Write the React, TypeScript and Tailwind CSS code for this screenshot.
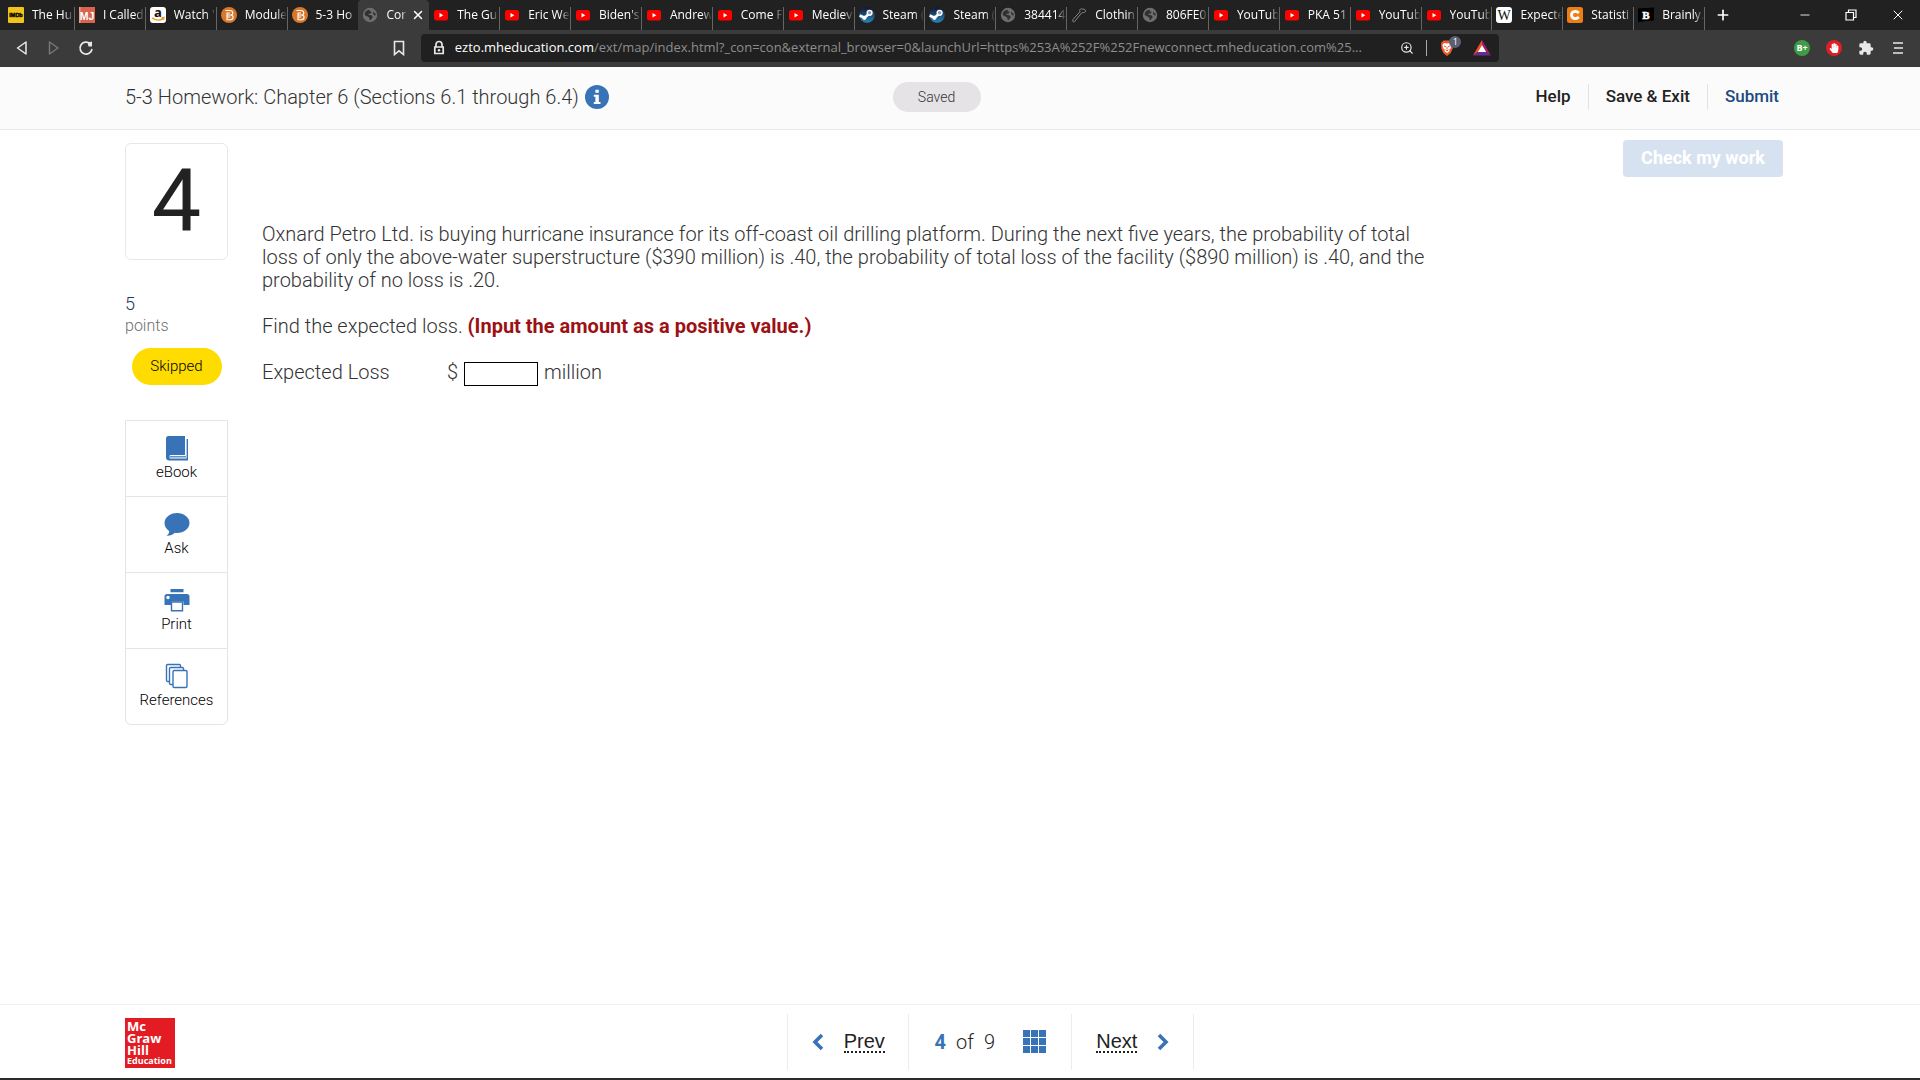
import type { ReactNode } from "react";
import { Minus, Plus, X, ZoomIn } from "lucide-react";
import { clsx } from "clsx";
import { FaHandPaper } from "react-icons/fa";
import { MdExtension } from "react-icons/md";

type TabKind =
  | "imdb"
  | "mj"
  | "amazon"
  | "bright"
  | "globe"
  | "youtube"
  | "steam"
  | "bone"
  | "wiki"
  | "chegg"
  | "brainly";

const TABS: { kind: TabKind; title: string; active?: boolean }[] = [
  { kind: "imdb", title: "The Hu" },
  { kind: "mj", title: "I Called" },
  { kind: "amazon", title: "Watch '" },
  { kind: "bright", title: "Module" },
  { kind: "bright", title: "5-3 Ho" },
  { kind: "globe", title: "Cor", active: true },
  { kind: "youtube", title: "The Gu" },
  { kind: "youtube", title: "Eric We" },
  { kind: "youtube", title: "Biden's" },
  { kind: "youtube", title: "Andrew" },
  { kind: "youtube", title: "Come F" },
  { kind: "youtube", title: "Mediev" },
  { kind: "steam", title: "Steam (" },
  { kind: "steam", title: "Steam (" },
  { kind: "globe", title: "384414" },
  { kind: "bone", title: "Clothin" },
  { kind: "globe", title: "806FE0" },
  { kind: "youtube", title: "YouTub" },
  { kind: "youtube", title: "PKA 51" },
  { kind: "youtube", title: "YouTub" },
  { kind: "youtube", title: "YouTub" },
  { kind: "wiki", title: "Expecte" },
  { kind: "chegg", title: "Statisti" },
  { kind: "brainly", title: "Brainly." },
];

function Favicon({ kind }: { kind: TabKind }) {
  switch (kind) {
    case "imdb":
      return (
        <svg viewBox="0 0 16 16" className="size-4">
          <rect width="16" height="16" rx="1" fill="#f0c419" />
          <text
            x="8"
            y="10"
            textAnchor="middle"
            fontFamily="Liberation Sans"
            fontWeight="700"
            fontSize="5.5"
            stroke="#000"
            strokeWidth="0.4"
          >
            IMDb
          </text>
        </svg>
      );
    case "mj":
      return (
        <svg viewBox="0 0 16 16" className="size-4">
          <rect width="16" height="16" fill="#d9634c" />
          <rect width="1.5" height="16" fill="#e9a08f" />
          <text
            x="8"
            y="12.5"
            textAnchor="middle"
            fontFamily="Liberation Sans"
            fontWeight="700"
            fontSize="10.5"
            fill="#fff"
          >
            MJ
          </text>
        </svg>
      );
    case "amazon":
      return (
        <svg viewBox="0 0 16 16" className="size-4">
          <rect width="16" height="16" rx="3" fill="#fff" />
          <text
            x="8"
            y="10"
            textAnchor="middle"
            fontFamily="Open Sans"
            fontWeight="700"
            fontSize="13"
            fill="#111"
          >
            a
          </text>
          <path
            d="M2 10.8c3.5 3 8.5 3 11.5.6M11.5 10.8l2.5-.2-.6 2.4"
            fill="none"
            stroke="#f59a1d"
            strokeWidth="1.4"
          />
        </svg>
      );
    case "bright":
      return (
        <svg viewBox="0 0 16 16" className="size-4">
          <circle cx="8" cy="8" r="8" fill="#d9772b" />
          <path
            d="M4.5 3.5h4.5c3.5 0 3.5 4 1 4.5 3 .5 2.8 4.8-1 4.8H6V6h3M6 12.8V10h3.2M6 8h4"
            fill="none"
            stroke="#fff"
            strokeWidth="1.1"
          />
        </svg>
      );
    case "globe":
      return (
        <svg viewBox="0 0 16 16" className="size-4">
          <circle cx="8" cy="8" r="7.2" fill="#6e6e6e" />
          <path
            d="M2.8 5.8c1.3-2 3-3 5-3-.6 1.4.4 1.8 1.6 2 .4 1.5-.8 1.9-2.4 1.9-1 0-1.2 1.3.8 1.3 2 0 3.2 1 2.7 2.6-.5 1.3-1.7 1.5-2.2 2.8-1.2-.3-.6-2-1.2-2.8C6.3 9.5 4 9.3 2.8 8z"
            fill="#303030"
          />
          <path
            d="M11 4.5c1 .8 1.3 1.8 2.6 2v2c-1.6.2-2.8-1.2-2.6-4z"
            fill="#303030"
          />
        </svg>
      );
    case "youtube":
      return (
        <svg viewBox="0 0 16 16" className="size-4">
          <rect x="1" y="3" width="14" height="10.5" rx="2.5" fill="#f00" />
          <path d="M6.500 6v4.500l3.800-2.200z" fill="#fff" />
        </svg>
      );
    case "steam":
      return (
        <svg viewBox="0 0 16 16" className="size-4">
          <defs>
            <linearGradient id="steam" x1="0" y1="0" x2="0" y2="1">
              <stop offset="0" stopColor="#10182e" />
              <stop offset="1" stopColor="#2a86bd" />
            </linearGradient>
          </defs>
          <circle cx="8" cy="8" r="7.8" fill="url(#steam)" />
          <path
            d="M.6 8.5l5 2.2 4.500-4"
            fill="none"
            stroke="#fff"
            strokeWidth="2.6"
          />
          <circle cx="5.4" cy="10.8" r="2.1" fill="#fff" />
          <circle cx="10.6" cy="5.8" r="3.1" fill="#fff" />
          <circle cx="10.6" cy="5.8" r="1.7" fill="#8fa3b8" />
        </svg>
      );
    case "bone":
      return (
        <svg viewBox="0 0 16 16" className="size-4">
          <path
            d="M2 12.5l7-7.8c-.8-1.200 0-3 1.500-2.900 1 .1 1.600.6 2.400.5 1.500-.1 2.200 1.700 1.200 2.700-1 1-2.600.2-3.400.9L3.800 14.300c-.4 1-1.900.9-2-.2z"
            fill="#1f1f1f"
            stroke="#8a8a8a"
          />
        </svg>
      );
    case "wiki":
      return (
        <svg viewBox="0 0 16 16" className="size-4">
          <rect width="16" height="16" rx="3" fill="#fff" />
          <text
            x="8"
            y="12.5"
            textAnchor="middle"
            fontFamily="Liberation Serif"
            fontSize="14"
            fill="#111"
          >
            W
          </text>
        </svg>
      );
    case "chegg":
      return (
        <svg viewBox="0 0 16 16" className="size-4">
          <rect width="16" height="16" rx="2.5" fill="#eb7f14" />
          <path
            d="M11.8 6C8.8 3 4.5 4.8 4.5 8s4.3 5 7.3 2"
            fill="none"
            stroke="#fff"
            strokeWidth="2.8"
          />
        </svg>
      );
    case "brainly":
      return (
        <svg viewBox="0 0 16 16" className="size-4">
          <path d="M0 1.5L16 .5v13L0 15z" fill="#000" />
          <text
            x="8"
            y="12"
            textAnchor="middle"
            fontFamily="Liberation Serif"
            fontWeight="700"
            fontSize="11"
            fill="#fff"
            stroke="#fff"
            strokeWidth="0.5"
          >
            B
          </text>
        </svg>
      );
  }
}

function TabStrip() {
  return (
    <div className="flex h-[30px] bg-[#212121]">
      <div className="flex min-w-0 flex-1 pl-1">
        {TABS.map((tab, i) => {
          const hasDivider = !tab.active && !TABS[i + 1]?.active;
          return (
            <div
              key={i}
              className={clsx(
                "flex min-w-0 flex-1 items-center rounded-t pl-1",
                tab.active && "bg-[#3b3b3b]",
              )}
            >
              <button className="flex min-w-0 flex-1 items-center gap-2">
                <span className="shrink-0">
                  <Favicon kind={tab.kind} />
                </span>
                <span className="min-w-0 flex-1 overflow-hidden text-left text-xs whitespace-nowrap text-white [mask-image:linear-gradient(to_right,black_75%,transparent)]">
                  {tab.title}
                </span>
              </button>
              {tab.active ? (
                <button aria-label="Close tab" className="mx-1 shrink-0">
                  <X className="size-3.5 text-white" strokeWidth={2.5} />
                </button>
              ) : (
                <span
                  className={clsx(
                    "h-[23px] w-px shrink-0 self-end",
                    hasDivider && "bg-[#666666]",
                  )}
                />
              )}
            </div>
          );
        })}
      </div>
      <div className="flex w-[215px] shrink-0 items-center justify-between pr-3.5 pl-2.5 text-white">
        <button aria-label="New tab">
          <Plus className="size-4" strokeWidth={2.5} />
        </button>
        <div className="flex items-center gap-8">
          <button aria-label="Minimize">
            <Minus className="size-3.5" strokeWidth={1.5} />
          </button>
          <button aria-label="Restore">
            <svg viewBox="0 0 14 14" className="size-3.5">
              <path
                d="M2 4.5h7.5V12H2zM4.5 4.5V2H12v7.5H9.5"
                fill="none"
                stroke="currentColor"
                strokeWidth="1.2"
              />
            </svg>
          </button>
          <button aria-label="Close window">
            <X className="size-4" strokeWidth={1.5} />
          </button>
        </div>
      </div>
    </div>
  );
}

function Toolbar() {
  return (
    <div className="flex h-[37px] items-center bg-[#3b3b3b] px-3.5 pb-px text-[#e8e8e8]">
      <div className="flex flex-1 items-center gap-4">
        <button aria-label="Back">
          <svg viewBox="0 0 16 16" className="size-4">
            <path
              d="M12 2v12L3.5 8z"
              fill="none"
              stroke="currentColor"
              strokeWidth="1.5"
              strokeLinejoin="round"
            />
          </svg>
        </button>
        <button aria-label="Forward">
          <svg viewBox="0 0 16 16" className="size-4">
            <path
              d="M3.5 2v12l8.5-6z"
              fill="none"
              stroke="#777"
              strokeWidth="1.5"
              strokeLinejoin="round"
            />
          </svg>
        </button>
        <button aria-label="Reload">
          <svg viewBox="0 0 16 16" className="size-4">
            <path
              d="M14 9a6 6 0 1 1-2-5.5"
              fill="none"
              stroke="currentColor"
              strokeWidth="1.7"
            />
            <path d="M9.5 2.5L14 1.5V6.5H10.5z" fill="currentColor" />
          </svg>
        </button>
        <button aria-label="Bookmark this page" className="mr-3.5 ml-auto">
          <svg viewBox="0 0 16 16" className="size-4">
            <path
              d="M3.5 1.5h9v13L8 10.8l-4.5 3.7z"
              fill="none"
              stroke="currentColor"
              strokeWidth="1.6"
            />
          </svg>
        </button>
      </div>
      <div className="flex h-7 w-[57%] items-center rounded bg-[#202020] pr-2 pl-2.5">
        <svg viewBox="0 0 16 16" className="mr-2 size-4 shrink-0">
          <path
            d="M5 7V4.5a3 3 0 0 1 6 0V7M3.8 7h8.4v6.5H3.8z"
            fill="none"
            stroke="currentColor"
            strokeWidth="1.7"
          />
          <circle cx="8" cy="10.2" r="1.2" fill="currentColor" />
        </svg>
        <p className="min-w-0 flex-1 truncate text-[13px] text-[#8e8e8e]">
          <span className="text-white">ezto.mheducation.com</span>
          /ext/map/index.html?_con=con&amp;external_browser=0&amp;launchUrl=https%253A%252F%252Fnewconnect.mheducation.com%25...
        </p>
        <button aria-label="Zoom" className="ml-4">
          <ZoomIn className="size-3.5" />
        </button>
        <span className="mx-3 h-4 w-px bg-[#aaaaaa]" />
        <button aria-label="Brave Shields" className="relative">
          <svg viewBox="0 0 16 16" className="size-4">
            <path
              d="M4.5.5h7L14 3l-.3 5.5-2 4.5L8 16l-3.7-3-2-4.5L2 3z"
              fill="#f0592b"
            />
            <path
              d="M5 3l3 .6L11 3l1.6 2.2-1 3.3-1.4 1.3.3 1.4L8 13l-2.5-1.8.3-1.4-1.4-1.3-1-3.3z"
              fill="#fff"
            />
            <path
              d="M5 6l2 .8M11 6l-2 .8M8 6.8v2.7M6.6 9.8L8 10.8l1.4-1"
              fill="none"
              stroke="#f0592b"
            />
          </svg>
          <span className="absolute -top-1 left-2.5 flex size-3 items-center justify-center rounded-full bg-[#5b5f72] text-[9px] text-white">
            1
          </span>
        </button>
        <button aria-label="Brave Rewards" className="ml-[18px]">
          <svg viewBox="0 0 18 16" className="h-4 w-[18px]">
            <path d="M9 0l9 15.5L11.5 11 9 5z" fill="#9e1f63" />
            <path d="M0 15.5h18L13 11.5H5z" fill="#662d91" />
            <path d="M9 0L0 15.5l5-4L9 5z" fill="#ff4724" />
            <path d="M9 5l4.2 7H4.8z" fill="#fff" />
          </svg>
        </button>
      </div>
      <div className="flex flex-1 items-center justify-end gap-4">
        <button
          aria-label="Extension"
          className="flex size-4 items-center justify-center rounded-full bg-[#3f9c46] text-[9px] font-bold text-white"
        >
          B+
        </button>
        <button
          aria-label="Ad blocker"
          className="flex size-4 items-center justify-center rounded-full bg-[#dd1f26]"
        >
          <FaHandPaper className="size-2.5 text-white" />
        </button>
        <button aria-label="Extensions">
          <MdExtension className="size-4" />
        </button>
        <button aria-label="Menu">
          <svg viewBox="0 0 16 16" className="size-4">
            <path
              d="M3 3h10M4 8h9M3 13h10"
              stroke="currentColor"
              strokeWidth="1.6"
            />
          </svg>
        </button>
      </div>
    </div>
  );
}

function AssignmentHeader() {
  return (
    <header className="grid h-[63px] shrink-0 grid-cols-[22fr_auto_23fr] items-center border-b border-[#e9e9e9] bg-[#fbfbfb] pr-[137px] pb-0.5 pl-[125px]">
      <div className="flex items-center gap-1.5">
        <h1 className="text-xl text-[#333333]">
          5-3 Homework: Chapter 6 (Sections 6.1 through 6.4)
        </h1>
        <button aria-label="Assignment information">
          <svg viewBox="0 0 24 24" className="size-6">
            <circle cx="12" cy="12" r="12" fill="#3873b8" />
            <path
              d="M10.4 4.8h3.4v3h-3.4zM8.8 9.8h5V17H15.5v2H8.8v-2h1.6v-5.2H8.8z"
              fill="#fff"
            />
          </svg>
        </button>
      </div>
      <span className="flex h-[30px] w-22 items-center justify-center rounded-full bg-[#e5e3e6] text-sm text-[#333333]">
        Saved
      </span>
      <nav className="flex items-center justify-end pr-1 text-[17px] font-medium text-[#222222]">
        <button className="pr-[17px]">Help</button>
        <button className="border-x border-[#e2e2e2] px-[17px]">
          Save &amp; Exit
        </button>
        <button className="pl-[17px] text-[#1d4a7e]">Submit</button>
      </nav>
    </header>
  );
}

function ToolButton(props: { label: string; children: ReactNode }) {
  return (
    <button className="flex h-19 flex-col items-center border-b border-[#e4e4e4] pt-3.5 last:h-[75px] last:border-b-0">
      <svg viewBox="0 0 26 26" className="size-[26px]">
        {props.children}
      </svg>
      <span className="text-[15px] leading-[22px]">{props.label}</span>
    </button>
  );
}

function Sidebar() {
  return (
    <aside className="flex w-[103px] shrink-0 flex-col">
      <div className="flex h-[117px] items-center justify-center rounded-md border border-[#e8e8e8] pb-1 text-[88px] leading-none font-normal text-[#222222]">
        4
      </div>
      <p className="mt-8 text-lg leading-6 text-[#1f3a5a]">5</p>
      <p className="text-base leading-5 text-[#6f6f6f]">points</p>
      <span className="mt-3 flex h-[37px] w-[90px] items-center justify-center self-center rounded-full bg-[#ffdc00] text-[15px]">
        Skipped
      </span>
      <div className="mt-[35px] flex flex-col rounded-b-md border border-[#e4e4e4]">
        <ToolButton label="eBook">
          <path
            d="M4.5 1H21v19H6.3c-1 0-1 3.6 0 3.6H22.6V4H24v21.5H5C3 25.5 2 24 2 22.5v-19C2 2 3 1 4.5 1z"
            fill="#3873b8"
          />
          <path d="M6 21.800h16" stroke="#3873b8" strokeWidth="1.2" />
        </ToolButton>
        <ToolButton label="Ask">
          <path
            d="M13 2C6 2 .5 6.500.5 12c0 3.500 2 6.300 4.800 8.200-.3 2-1.300 3.500-2.800 4.600 3.600.2 6.500-1 8.200-3 .8.200 1.500.2 2.300.2 7 0 12.500-4.500 12.500-10S20 2 13 2z"
            fill="#3873b8"
          />
        </ToolButton>
        <ToolButton label="Print">
          <path
            d="M6.5 2h13v3.2h-13zM3 7h20c1.5 0 2.5 1 2.5 2.5V18h-6v-3.5H7V18H.5V9.5C.5 8 1.500 7 3 7z"
            fill="#3873b8"
          />
          <circle cx="4" cy="10.5" r="1.7" fill="#fff" />
          <path
            d="M7.5 15v8.8h11V15z"
            fill="#fff"
            stroke="#3873b8"
            strokeWidth="1.4"
          />
        </ToolButton>
        <ToolButton label="References">
          <g fill="#fff" stroke="#3873b8" strokeWidth="1.4">
            <rect x="2.5" y="1.5" width="14" height="17" rx="1.2" />
            <rect x="5.5" y="4.5" width="14" height="17" rx="1.2" />
            <rect x="9" y="7.5" width="14" height="17" rx="1.2" />
          </g>
        </ToolButton>
      </div>
    </aside>
  );
}

function Question() {
  return (
    <section className="mt-20 ml-[34px] max-w-[1180px] flex-1 text-xl leading-[23px] text-[#333333]">
      <p>
        Oxnard Petro Ltd. is buying hurricane insurance for its off-coast oil
        drilling platform. During the next five years, the probability of total
        loss of only the above-water superstructure ($390 million) is .40, the
        probability of total loss of the facility ($890 million) is .40, and the
        probability of no loss is .20.
      </p>
      <p className="mt-[23px]">
        Find the expected loss.{" "}
        <strong className="font-bold text-[#9c1114]">
          (Input the amount as a positive value.)
        </strong>
      </p>
      <div className="mt-5 flex items-center">
        <label htmlFor="expected-loss" className="w-[185px]">
          Expected Loss
        </label>
        <span>$</span>
        <input
          id="expected-loss"
          type="text"
          className="mx-1.5 mt-1 h-6 w-[74px] border border-black bg-white px-1"
        />
        <span>million</span>
      </div>
    </section>
  );
}

function Footer() {
  return (
    <footer className="grid h-[74px] shrink-0 grid-cols-[9fr_auto_8fr] items-center border-t border-[#efefef] pr-[137px] pl-[125px]">
      <div className="mt-0.5 flex size-[50px] flex-col bg-[#e31b23] px-0.5 pt-0.5 font-['Open_Sans',sans-serif] text-[13px] leading-3 font-bold text-white">
        <span>Mc</span>
        <span>Graw</span>
        <span>Hill</span>
        <span className="text-[9px] leading-[10px]">Education</span>
      </div>
      <nav className="flex h-14 items-stretch divide-x divide-[#ececec] border-x border-[#ececec] text-xl text-[#222222]">
        <button className="flex w-[121px] items-center justify-center gap-5 font-['Liberation_Sans',sans-serif]">
          <svg viewBox="0 0 12 18" className="h-[18px] w-3">
            <path
              d="M10 2L3 9l7 7"
              fill="none"
              stroke="#3873b8"
              strokeWidth="3.6"
            />
          </svg>
          <span className="border-b-2 border-dotted border-[#222222] leading-5">
            Prev
          </span>
        </button>
        <div className="flex w-[163px] items-center justify-center gap-7">
          <p className="flex gap-2.5">
            <span className="font-bold text-[#3873b8]">4</span>
            <span>of</span>
            <span>9</span>
          </p>
          <button aria-label="Question list">
            <svg viewBox="0 0 23 23" className="size-[23px]" fill="#3873b8">
              {[0, 8, 16].map((y) =>
                [0, 8, 16].map((x) => (
                  <rect key={`${x}-${y}`} x={x} y={y} width="7" height="7" />
                )),
              )}
            </svg>
          </button>
        </div>
        <button className="flex w-[121px] items-center justify-center gap-5 font-['Liberation_Sans',sans-serif]">
          <span className="border-b-2 border-dotted border-[#222222] leading-5">
            Next
          </span>
          <svg viewBox="0 0 12 18" className="h-[18px] w-3">
            <path
              d="M2 2l7 7-7 7"
              fill="none"
              stroke="#3873b8"
              strokeWidth="3.6"
            />
          </svg>
        </button>
      </nav>
    </footer>
  );
}

export default function App() {
  return (
    <div className="flex min-h-screen flex-col border-b-2 border-[#2b2b2b] bg-white">
      <div className="font-['Open_Sans',sans-serif]">
        <TabStrip />
        <Toolbar />
      </div>
      <div className="flex flex-1 flex-col font-['Roboto',sans-serif] font-light">
        <AssignmentHeader />
        <main className="flex flex-1 items-start pr-[137px] pl-[125px]">
          <div className="mt-[13px] flex flex-1">
            <Sidebar />
            <Question />
          </div>
          <button className="mt-2.5 h-[37px] w-40 rounded bg-[#d7e2f0] pb-0.5 text-lg font-bold text-white">
            Check my work
          </button>
        </main>
        <Footer />
      </div>
    </div>
  );
}
